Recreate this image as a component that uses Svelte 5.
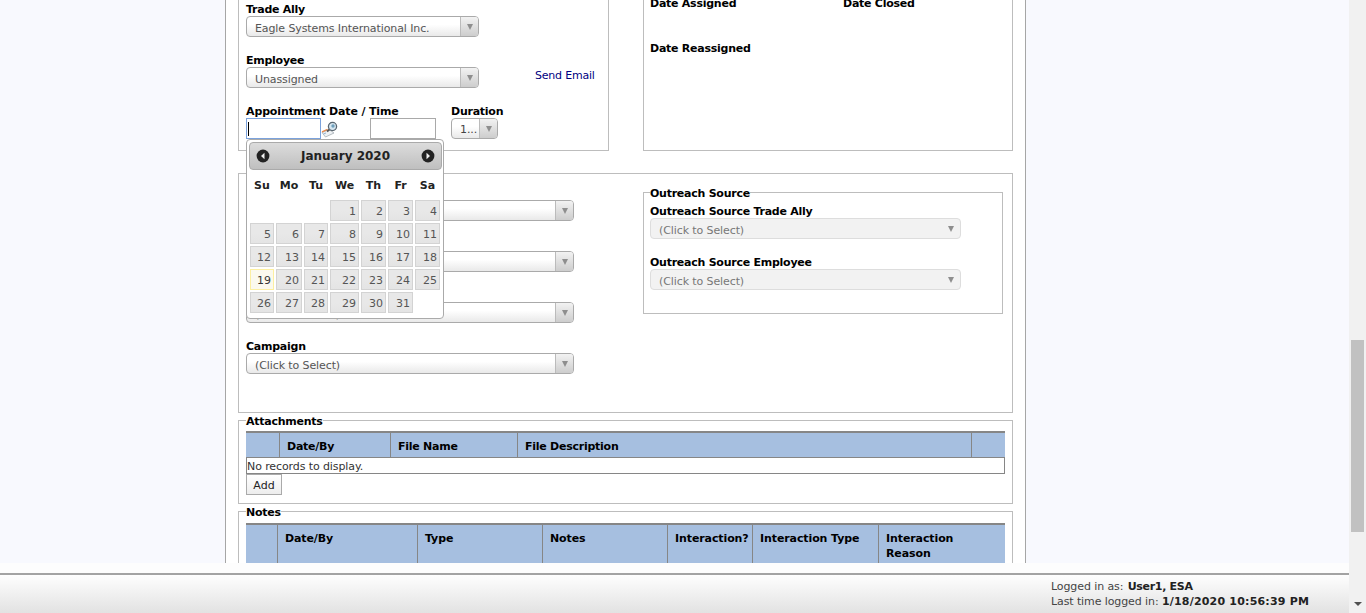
<script>
  const leftFields = [
    { label: '', value: '(Click to Select)' },
    { label: '', value: '(Click to Select)' },
    { label: '', value: '(Click to Select)' },
    { label: 'Campaign', value: '(Click to Select)' }
  ];
  const dayNames = ['Su', 'Mo', 'Tu', 'We', 'Th', 'Fr', 'Sa'];
  const days = Array.from({ length: 31 }, (_, i) => i + 1);
  const attachCols = ['', 'Date/By', 'File Name', 'File Description', ''];
  const noteCols = ['', 'Date/By', 'Type', 'Notes', 'Interaction?', 'Interaction Type', 'Interaction Reason'];
</script>

<div class="app">
  <div class="main">
    <div class="view">
      <div class="page">
        <div class="top-row">
          <section class="panel assign">
            <div class="field">
              <div class="label">Trade Ally</div>
              <div class="select w233"><span class="val">Eagle Systems International Inc.</span><span class="btn"><i class="tri"></i></span></div>
            </div>
            <div class="field email-row">
              <div>
                <div class="label">Employee</div>
                <div class="select w233"><span class="val">Unassigned</span><span class="btn"><i class="tri"></i></span></div>
              </div>
              <a class="send" href="#email">Send Email</a>
            </div>
            <div class="appt">
              <div class="date-col">
                <div class="label appt-label">Appointment Date / Time</div>
                <div class="date-inputs">
                  <div class="input focus"><span class="caret"></span></div>
                  <svg class="cal-icon" width="17" height="17" viewBox="0 0 17 17">
                    <path d="M1 11.5 L8 8.5 L13 12 L4.5 16 Z" fill="#eef1f3" stroke="#a4adb4" stroke-width=".8"/>
                    <path d="M1 10.8 L6.5 8.4" stroke="#e8894a" stroke-width="1.3" fill="none"/>
                    <path d="M2.5 13 L5 12" stroke="#8fb2d0" stroke-width="1" fill="none"/>
                    <path d="M6 10.5 L8.5 8.5" stroke="#555" stroke-width="1.8"/>
                    <circle cx="11.5" cy="5.5" r="4.1" fill="#d6e6f0" stroke="#5a6670" stroke-width="1.3"/>
                    <circle cx="12" cy="5" r="1.7" fill="#6f9fbb"/>
                  </svg>
                  <div class="input time"></div>
                </div>
              </div>
              <div class="dur-col">
                <div class="label">Duration</div>
                <div class="select w47"><span class="val dur">1...</span><span class="btn"><i class="tri"></i></span></div>
              </div>
            </div>
          </section>

          <section class="panel dates">
            <div class="label">Date Assigned</div>
            <div class="label">Date Closed</div>
            <div class="label">Date Reassigned</div>
          </section>
        </div>

        <section class="panel source">
          <div class="left-col">
            {#each leftFields as f}
              <div class="field">
                <div class="label">{f.label || '\u00a0'}</div>
                <div class="select w328"><span class="val">{f.value}</span><span class="btn"><i class="tri"></i></span></div>
              </div>
            {/each}
          </div>
          <fieldset class="outreach">
            <legend>Outreach Source</legend>
            <div class="field">
              <div class="label">Outreach Source Trade Ally</div>
              <div class="select off"><span class="val">(Click to Select)</span><i class="tri"></i></div>
            </div>
            <div class="field">
              <div class="label">Outreach Source Employee</div>
              <div class="select off"><span class="val">(Click to Select)</span><i class="tri"></i></div>
            </div>
          </fieldset>
        </section>

        <fieldset class="block attachments">
          <legend>Attachments</legend>
          <div class="grid-head attach-cols">
            {#each attachCols as c}<div class="th">{c}</div>{/each}
          </div>
          <div class="empty">No records to display.</div>
          <button class="add">Add</button>
        </fieldset>

        <fieldset class="block notes">
          <legend>Notes</legend>
          <div class="grid-head note-cols">
            {#each noteCols as c}<div class="th">{c}</div>{/each}
          </div>
        </fieldset>
      </div>

      <div class="calendar">
        <div class="cal-head">
          <svg width="14" height="14" viewBox="0 0 14 14"><circle cx="7" cy="7" r="6.4" fill="#222"/><path d="M8.5 3.8 L5 7 L8.5 10.2 Z" fill="#eee"/></svg>
          <span class="month">January 2020</span>
          <svg width="14" height="14" viewBox="0 0 14 14"><circle cx="7" cy="7" r="6.4" fill="#222"/><path d="M5.5 3.8 L9 7 L5.5 10.2 Z" fill="#eee"/></svg>
        </div>
        <div class="cal-grid names">
          {#each dayNames as d}<div class="dn">{d}</div>{/each}
        </div>
        <div class="cal-grid">
          <div class="blank"></div><div class="blank"></div><div class="blank"></div>
          {#each days as d}
            <div class="day" class:today={d === 19}>{d}</div>
          {/each}
        </div>
      </div>
    </div>
    <div class="strip"></div>
    <footer class="footer">
      <div class="login">
        <div>Logged in as: <b class="user">User1, ESA</b></div>
        <div>Last time logged in: <b class="stamp">1/18/2020 10:56:39 PM</b></div>
      </div>
    </footer>
  </div>
  <aside class="scrollbar">
    <i class="up"></i>
    <div class="track"><div class="thumb"></div></div>
    <i class="down"></i>
  </aside>
</div>

<style>
  :global(body) {
    margin: 0;
    overflow: hidden;
    font-family: "DejaVu Sans", Verdana, sans-serif;
    font-size: 11px;
    line-height: 15px;
    letter-spacing: -0.1px;
    color: #000;
    background: #f8f9fe;
  }
  .app { display: flex; width: 1366px; height: 613px; overflow: hidden; }
  .main { width: 1349px; display: flex; flex-direction: column; position: relative; }
  .view { height: 563px; overflow: hidden; position: relative; flex: none; }
  .page {
    width: 775px;
    margin: -40px 0 0 225px;
    padding: 0 12px;
    background: #fff;
    border-left: 1px solid #a6a6a6;
    border-right: 1px solid #a6a6a6;
    min-height: 700px;
  }
  .strip { height: 10px; background: #fdfdfd; flex: none; }
  .footer {
    flex: 1;
    border-top: 2px solid #a3a3a3;
    background: linear-gradient(#fefefe, #e2e2e2);
    padding: 4px 0 0 1051px;
    color: #444;
  }
  .footer b { color: #222; }
  .user { letter-spacing: -0.3px; margin-left: 1px; }
  .stamp { letter-spacing: 0.2px; }

  .top-row { display: flex; gap: 34px; }
  .panel { border: 1px solid #bdbdbd; box-sizing: border-box; }
  .assign { width: 371px; height: 191px; padding: 40px 0 0 7px; }
  .dates {
    width: 370px; height: 191px; padding: 34px 0 0 6px;
    display: grid; grid-template-columns: 193px 1fr; grid-template-rows: 45px; align-content: start;
  }
  .field { margin-bottom: 15px; }
  .email-row { display: flex; align-items: flex-start; }
  .label { font-weight: 700; height: 15px; line-height: 17px; white-space: nowrap; letter-spacing: -0.25px; }
  .appt-label { letter-spacing: -0.13px; }
  .send { color: #00007f; text-decoration: none; margin: 16px 0 0 56px; letter-spacing: -0.2px; }
  .select {
    height: 21px; box-sizing: border-box;
    border: 1px solid #aaa; border-radius: 4px;
    background: linear-gradient(#fff, #fff 40%, #e9e9e9);
    display: flex; align-items: center; justify-content: space-between;
    color: #555;
    overflow: hidden;
  }
  .w233 { width: 233px; }
  .w328 { width: 328px; }
  .w47 { width: 47px; }
  .val { padding: 4px 0 0 8px; white-space: nowrap; }
  .dur { color: #444; padding-top: 2px; }
  .btn {
    width: 18px; align-self: stretch; flex: none;
    border-left: 1px solid #bbb; box-sizing: border-box;
    background: linear-gradient(#f2f2f2, #cdcdcd);
    display: flex; align-items: center; justify-content: center;
  }
  .tri {
    display: block; width: 0; height: 0;
    border-left: 3.5px solid transparent; border-right: 3.5px solid transparent;
    border-top: 6px solid #8e8e8e;
  }
  .off {
    width: 311px; background: #f2f2f2; border-color: #ddd; color: #777;
    padding-right: 6px;
  }
  .appt { display: flex; }
  .date-col { width: 205px; }
  .date-inputs { display: flex; align-items: center; }
  .input { height: 21px; box-sizing: border-box; border: 1px solid #a9a9a9; background: #fff; }
  .focus { width: 75px; border-color: #7ba2dc; display: flex; align-items: center; padding-left: 1px; }
  .caret { width: 1px; height: 14px; background: #000; }
  .cal-icon { margin-top: 2px; flex: none; }
  .time { width: 66px; margin-left: 32px; }

  .source {
    display: flex; padding: 11px 9px 23px 7px; margin-top: 22px; height: 240px;
  }
  .left-col { width: 397px; flex: none; }
  fieldset { margin: 0; min-width: 0; box-sizing: border-box; border: 1px solid #bdbdbd; }
  legend { padding: 0; font-weight: 700; height: 15px; line-height: 17px; letter-spacing: -0.25px; }
  .outreach { width: 360px; height: 129px; padding: 3px 7px 0 6px; }
  .block { padding: 0 7px; width: 775px; }
  .attachments { height: 91px; padding-top: 3px; }
  .notes { height: 80px; padding-top: 4px; }
  .grid-head {
    display: grid; width: 759px; box-sizing: border-box;
    background: #a6bfe0;
    border-top: 2px solid #868686; border-bottom: 1px solid #868686;
    font-weight: 700;
    letter-spacing: -0.25px;
  }
  .attach-cols { grid-template-columns: 33px 111px 127px 454px 34px; height: 27px; }
  .note-cols { grid-template-columns: 31px 140px 125px 125px 85px 126px 127px; height: 60px; letter-spacing: -0.1px; }
  .th { border-left: 1px solid #868686; padding: 6px 7px 0; box-sizing: border-box; }
  .th:first-child { border-left: none; }
  .empty {
    width: 759px; box-sizing: border-box; height: 16px; line-height: 17px;
    border: 1px solid #868686; border-top: none; color: #333;
  }
  .add {
    display: block; width: 36px; height: 21px; margin: 0; padding: 2px 0 0;
    border: 1px solid #aaa; background: linear-gradient(#fff, #ededed);
    font: inherit; color: #222;
  }

  .calendar {
    position: absolute; left: 246px; top: 139px; z-index: 5;
    width: 198px; height: 180px; box-sizing: border-box;
    background: #fff; border: 1px solid #aaa; border-radius: 4px;
    padding: 2px 1px 0 2px;
    letter-spacing: 0;
  }
  .cal-head {
    height: 28px; box-sizing: border-box;
    border: 1px solid #aaa; border-radius: 4px;
    background: linear-gradient(#dcdcdc, #bfbfbf);
    display: flex; align-items: center; justify-content: space-between;
    padding: 0 6px;
  }
  .month { font-weight: 700; font-size: 12px; color: #222; }
  .cal-grid {
    display: grid;
    grid-template-columns: 24px 26px 24px 29px 25px 25px 25px;
    gap: 2px;
    margin-left: 1px;
    grid-auto-rows: 21px;
  }
  .names { margin: 8px 0 7px 1px; grid-auto-rows: 15px; }
  .dn { font-weight: 700; text-align: center; color: #222; }
  .day {
    box-sizing: border-box;
    border: 1px solid #d3d3d3;
    background: linear-gradient(#e8e8e8, #e8e8e8 50%, #e4e4e4);
    text-align: right; padding-right: 2px; line-height: 21px; color: #555;
  }
  .today { border-color: #fcefa1; background: #fbf9ee; color: #363636; }

  .scrollbar { width: 17px; background: #f1f1f1; position: relative; flex: none; display: flex; flex-direction: column; }
  .up { display: block; height: 17px; flex: none; }
  .track { flex: 1; position: relative; padding-top: 323px; box-sizing: border-box; }
  .thumb { width: 13px; height: 192px; margin-left: 2px; background: #c1c1c1; }
  .down {
    display: block; height: 17px; flex: none; position: relative;
  }
  .down::after {
    content: ""; position: absolute; left: 5px; top: 6px; width: 0; height: 0;
    border-left: 4px solid transparent; border-right: 4px solid transparent;
    border-top: 4px solid #505050;
  }
</style>
